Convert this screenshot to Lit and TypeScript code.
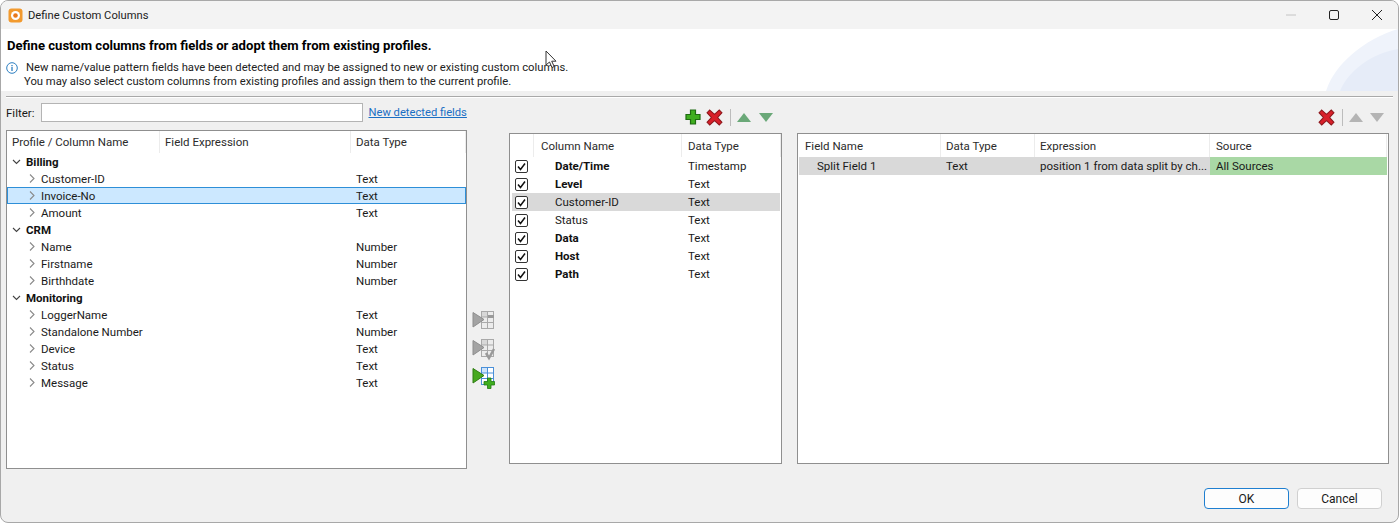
import { LitElement, html, css, svg } from "lit";
import { customElement } from "lit/decorators.js";

const TREE = [
  { name: "Billing", items: [["Customer-ID", "Text"], ["Invoice-No", "Text"], ["Amount", "Text"]] },
  { name: "CRM", items: [["Name", "Number"], ["Firstname", "Number"], ["Birthhdate", "Number"]] },
  {
    name: "Monitoring",
    items: [["LoggerName", "Text"], ["Standalone Number", "Number"], ["Device", "Text"], ["Status", "Text"], ["Message", "Text"]],
  },
];

const COLUMNS = [
  { name: "Date/Time", type: "Timestamp", bold: true },
  { name: "Level", type: "Text", bold: true },
  { name: "Customer-ID", type: "Text", bold: false, selected: true },
  { name: "Status", type: "Text", bold: false },
  { name: "Data", type: "Text", bold: true },
  { name: "Host", type: "Text", bold: true },
  { name: "Path", type: "Text", bold: true },
];

const plusIcon = html`<svg width="16" height="16" viewBox="0 0 16 16"><path d="M5.500 1h5v4.500H15v5h-4.500V15h-5v-4.500H1v-5h4.500z" fill="#3fae1f" stroke="#1f6b12" stroke-width="1.200"/></svg>`;
const crossIcon = html`<svg width="17" height="17" viewBox="0 0 16 16"><path d="M3.500 1 8 5l4.500-4L15 3.500 11 8l4 4.500-2.500 2.500L8 11l-4.500 4L1 12.500 5 8 1 3.500z" fill="#d8202a" stroke="#8e1a1f" stroke-width="1"/></svg>`;
const tri = (up: boolean, color: string) =>
  html`<svg width="14" height="9" viewBox="0 0 14 9"><path d="${up ? "M7 0l7 9H0z" : "M0 0h14L7 9z"}" fill="${color}"/></svg>`;

const transferIcon = (active: boolean, badge: "dash" | "check" | "plus") => {
  const grid = active ? "#4a90d9" : "#a9a9a9";
  const cell = active ? "#cfe4fa" : "#d8d8d8";
  const arrow = active ? "#47a91f" : "#a3a3a3";
  return html`<svg width="24" height="24" viewBox="0 0 24 24">
    <rect x="9.500" y="2.500" width="12" height="17" fill="${active ? "#fff" : "#ececec"}" stroke="${grid}"/>
    <rect x="10" y="3" width="6" height="5" fill="${cell}"/>
    <path d="M15.500 2.500v17M9.500 8h12M9.500 13.500h12" stroke="${grid}" fill="none"/>
    <path d="M1 3.500 12 10.500 1 18z" fill="${arrow}" stroke="${active ? "#2f7d12" : "#8e8e8e"}"/>
    ${badge === "dash" ? svg`<path d="M16 6h6v3h-6z" fill="#9a9a9a"/>` : ""}
    ${badge === "check" ? svg`<path d="M14 16l3 5 5-9" fill="none" stroke="#9a9a9a" stroke-width="2.500"/>` : ""}
    ${badge === "plus"
      ? svg`<path d="M15.500 13h3.500v3.500h3.500V20H19v3.500h-3.500V20H12v-3.500h3.500z" fill="#3fae1f" stroke="#1f7a12" stroke-width=".8"/>`
      : ""}
  </svg>`;
};

@customElement("app-root")
export class AppRoot extends LitElement {
  static styles = css`
    :host {
      display: block;
      height: 523px;
      width: 1399px;
      overflow: hidden;
      background: #fff;
      font-family: "Roboto", "Liberation Sans", sans-serif;
      font-size: 11.500px;
      color: #1a1a1a;
    }
    .window {
      position: relative;
      height: 523px;
      box-sizing: border-box;
      display: flex;
      flex-direction: column;
      background: #f0f0f0;
      border: 1px solid #a8a8a8;
      border-radius: 8px;
      overflow: hidden;
    }
    .titlebar {
      height: 28px;
      flex: none;
      display: flex;
      align-items: center;
      padding-left: 7px;
      gap: 5px;
      background: #f3f3f3;
    }
    .title {
      flex: 1;
      font-size: 11.200px;
      color: #222;
    }
    .winbtns {
      display: flex;
      align-items: center;
      gap: 33px;
      padding-right: 16px;
    }
    .header {
      position: relative;
      height: 62px;
      flex: none;
      background: #fff;
      box-sizing: border-box;
      padding: 9px 0 0 6px;
    }
    .swoosh {
      position: absolute;
      right: 0;
      top: 0;
    }
    .header h1 {
      margin: 0 0 7px;
      font-size: 13.100px;
      font-weight: 700;
      color: #000;
      line-height: 16px;
    }
    .info {
      display: flex;
      gap: 8px;
      line-height: 14px;
      font-size: 11.250px;
      color: #222;
      margin-left: -1px;
    }
    .info p {
      margin: 0;
    }
    .info p + p {
      margin-left: -2px;
    }
    .rule {
      height: 1px;
      flex: none;
      margin: 5px 5px 0;
      background: #a9a9a9;
      box-shadow: 0 1px 0 #fff;
    }
    .body {
      flex: 1;
      display: flex;
      padding: 6px 9px 0 5px;
      min-height: 0;
    }
    .left {
      width: 461px;
      flex: none;
      display: flex;
      flex-direction: column;
    }
    .filter {
      height: 19px;
      display: flex;
      align-items: center;
      gap: 6px;
      margin-bottom: 8px;
      white-space: nowrap;
    }
    .filter input {
      width: 322px;
      height: 19px;
      flex: none;
      box-sizing: border-box;
      border: 1px solid #b4b4b4;
      background: #fff;
      margin: 0;
      padding: 0;
    }
    .filter a {
      color: #1a6fc4;
      text-decoration: underline;
      font-size: 11.200px;
    }
    .strip {
      width: 42px;
      flex: none;
      display: flex;
      flex-direction: column;
      align-items: center;
      gap: 4px;
      padding-top: 206px;
      padding-right: 8px;
      box-sizing: border-box;
    }
    .middle {
      width: 273px;
      flex: none;
      display: flex;
      flex-direction: column;
    }
    .right {
      flex: 1;
      margin-left: 15px;
      display: flex;
      flex-direction: column;
    }
    .toolbar {
      height: 30px;
      flex: none;
      display: flex;
      align-items: center;
      gap: 5px;
      box-sizing: border-box;
      padding-bottom: 2px;
    }
    .toolbar.mid {
      padding-left: 176px;
    }
    .toolbar.end {
      justify-content: flex-end;
      padding-right: 5px;
    }
    .toolbar svg:last-child {
      margin-left: 3px;
    }
    .toolbar.end svg:last-child {
      margin-left: 2px;
    }
    .sep {
      width: 1px;
      height: 17px;
      background: #bcbcbc;
      margin: 0 1px 0 2px;
    }
    .table {
      background: #fff;
      border: 1px solid #8f8f8f;
      box-sizing: border-box;
      flex: none;
      overflow: hidden;
    }
    .tree {
      height: 339px;
    }
    .mid-table,
    .right-table {
      height: 331px;
    }
    .row {
      display: grid;
      align-items: center;
      white-space: nowrap;
    }
    .head span {
      height: 100%;
      display: flex;
      align-items: center;
      padding-left: 5px;
      box-sizing: border-box;
      border-right: 1px solid #ececec;
      color: #2b2b2b;
    }
    .tree .row {
      grid-template-columns: 153px 191px 1fr;
      height: 17px;
    }
    .tree .head {
      height: 22px;
    }
    .group {
      font-weight: 700;
      color: #111;
      display: flex;
      align-items: center;
      gap: 5px;
      height: 17px;
      padding-left: 5px;
    }
    .node {
      display: flex;
      align-items: center;
      gap: 6px;
      padding-left: 22px;
    }
    .tree .row .type {
      padding-left: 5px;
    }
    .tree .row.sel {
      background: #cce8ff;
      outline: 1px solid #2e8fd8;
      outline-offset: -1px;
    }
    .mid-table .row {
      grid-template-columns: 24px 148px 1fr;
      height: 18px;
    }
    .mid-table .head {
      height: 23px;
    }
    .mid-table .head span:nth-child(2) {
      padding-left: 7px;
    }
    .mid-table .head span:nth-child(3) {
      padding-left: 6px;
    }
    .mid-table .name {
      padding-left: 21px;
    }
    .mid-table .type {
      padding-left: 6px;
    }
    .mid-table .row.sel {
      background: #d9d9d9;
      margin: 0 1px 0 2px;
      grid-template-columns: 22px 148px 1fr;
    }
    .mid-table .row.sel .check {
      margin-left: 3px;
    }
    .mid-table .name.b {
      font-weight: 700;
      color: #111;
    }
    .check {
      width: 11px;
      height: 11px;
      margin-left: 5px;
      border: 1px solid #333;
      border-radius: 2px;
      background: #fff;
      display: flex;
      align-items: center;
      justify-content: center;
    }
    .right-table .row {
      grid-template-columns: 142px 94px 175px 1fr;
      height: 18px;
      margin: 0 1px;
    }
    .right-table .head {
      height: 23px;
    }
    .right-table .head span:first-child,
    .right-table .head span:last-child {
      padding-left: 6px;
    }
    .right-table .cell {
      padding-left: 5px;
      background: #d9d9d9;
      height: 100%;
      display: flex;
      align-items: center;
      box-sizing: border-box;
    }
    .right-table .cell.first {
      padding-left: 18px;
    }
    .right-table .cell.src {
      background: #a9d8a5;
      padding-left: 6px;
    }
    .footer {
      height: 57px;
      flex: none;
      display: flex;
      justify-content: flex-end;
      align-items: flex-start;
      gap: 8px;
      padding: 23px 16px 0 0;
      box-sizing: border-box;
    }
    button {
      width: 85px;
      height: 21px;
      box-sizing: border-box;
      border-radius: 4px;
      border: 1px solid #d0d0d0;
      background: #fdfdfd;
      font: inherit;
      font-size: 12px;
      color: #1a1a1a;
      padding: 0;
    }
    button.primary {
      border-color: #1f7fd0;
    }
    .cursor {
      position: absolute;
      left: 544px;
      top: 49px;
    }
  `;

  render() {
    return html`
      <div class="window">
        <div class="titlebar">
          <svg width="15" height="15" viewBox="0 0 15 15">
            <rect x="0.500" y="0.500" width="14" height="14" rx="3" fill="#f29a2e"/>
            <circle cx="7.500" cy="7.500" r="4.500" fill="#fff"/>
            <circle cx="7.500" cy="7.500" r="2.300" fill="#e8781a"/>
          </svg>
          <span class="title">Define Custom Columns</span>
          <div class="winbtns">
            <svg width="10" height="10" viewBox="0 0 10 10"><path d="M0 5h10" stroke="#c4c4c4"/></svg>
            <svg width="10" height="10" viewBox="0 0 10 10"><rect x=".5" y=".5" width="9" height="9" rx="1.500" fill="none" stroke="#222"/></svg>
            <svg width="10" height="10" viewBox="0 0 10 10"><path d="M0 0l10 10M10 0L0 10" stroke="#222"/></svg>
          </div>
        </div>
        <div class="header">
          <svg class="swoosh" width="72" height="62" viewBox="0 0 72 62">
            <path d="M0 62C8 36 38 10 72 0v62z" fill="#eff3fb"/>
            <path d="M14 62C22 42 46 24 72 20v42z" fill="#e6ecf8"/>
          </svg>
          <h1>Define custom columns from fields or adopt them from existing profiles.</h1>
          <div class="info">
            <svg width="12" height="12" viewBox="0 0 12 12" style="flex:none;margin-top:1px">
              <circle cx="6" cy="6" r="5.300" fill="#fff" stroke="#2d7fc1"/>
              <path d="M6 5v4M6 3v1.200" stroke="#2d7fc1" stroke-width="1.300"/>
            </svg>
            <div>
              <p>New name/value pattern fields have been detected and may be assigned to new or existing custom columns.</p>
              <p>You may also select custom columns from existing profiles and assign them to the current profile.</p>
            </div>
          </div>
        </div>
        <div class="rule"></div>
        <div class="body">
          <div class="left">
            <div class="filter">
              <span>Filter:</span>
              <input type="text" />
              <a href="#">New detected fields</a>
            </div>
            <div class="table tree">
              <div class="row head">
                <span>Profile / Column Name</span><span>Field Expression</span><span>Data Type</span>
              </div>
              ${TREE.map(
                (g) => html`
                  <div class="group">
                    <svg width="9" height="6" viewBox="0 0 9 6"><path d="M1 1l3.500 3.500L8 1" fill="none" stroke="#444" stroke-width="1.100"/></svg>
                    ${g.name}
                  </div>
                  ${g.items.map(
                    ([name, type]) => html`
                      <div class="row ${name === "Invoice-No" ? "sel" : ""}">
                        <div class="node">
                          <svg width="6" height="9" viewBox="0 0 6 9"><path d="M1 .5l4 4-4 4" fill="none" stroke="#8a8a8a" stroke-width="1.100"/></svg>
                          ${name}
                        </div>
                        <div></div>
                        <div class="type">${type}</div>
                      </div>
                    `
                  )}
                `
              )}
            </div>
          </div>
          <div class="strip">
            ${transferIcon(false, "dash")} ${transferIcon(false, "check")} ${transferIcon(true, "plus")}
          </div>
          <div class="middle">
            <div class="toolbar mid">
              ${plusIcon} ${crossIcon}
              <div class="sep"></div>
              ${tri(true, "#6aa878")} ${tri(false, "#6aa878")}
            </div>
            <div class="table mid-table">
              <div class="row head"><span></span><span>Column Name</span><span>Data Type</span></div>
              ${COLUMNS.map(
                (c) => html`
                  <div class="row ${c.selected ? "sel" : ""}">
                    <div class="check">
                      <svg width="9" height="9" viewBox="0 0 9 9"><path d="M1 4.500l2.500 3L8 1.500" fill="none" stroke="#111" stroke-width="1.500"/></svg>
                    </div>
                    <div class="name ${c.bold ? "b" : ""}">${c.name}</div>
                    <div class="type">${c.type}</div>
                  </div>
                `
              )}
            </div>
          </div>
          <div class="right">
            <div class="toolbar end">
              ${crossIcon}
              <div class="sep"></div>
              ${tri(true, "#b4b4b4")} ${tri(false, "#b4b4b4")}
            </div>
            <div class="table right-table">
              <div class="row head"><span>Field Name</span><span>Data Type</span><span>Expression</span><span>Source</span></div>
              <div class="row">
                <div class="cell first">Split Field 1</div>
                <div class="cell">Text</div>
                <div class="cell">position 1 from data split by ch...</div>
                <div class="cell src">All Sources</div>
              </div>
            </div>
          </div>
        </div>
        <div class="footer">
          <button class="primary">OK</button>
          <button>Cancel</button>
        </div>
        <svg class="cursor" width="13" height="19" viewBox="0 0 13 19">
          <path d="M1 1v14l3.500-3 2.500 5.500 2.200-1-2.500-5.300H11z" fill="#fff" stroke="#333"/>
        </svg>
      </div>
    `;
  }
}
